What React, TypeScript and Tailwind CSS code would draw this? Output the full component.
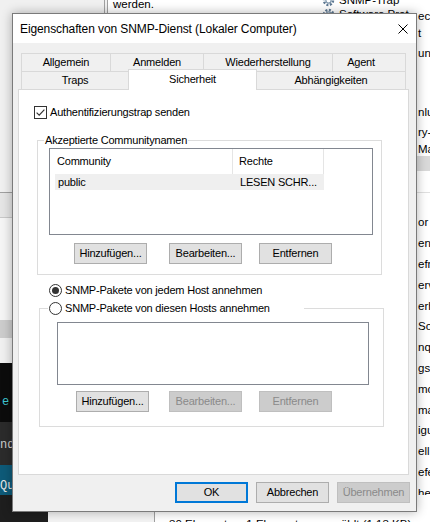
import React from "react";

const btnBase =
  "flex h-[21px] w-[73px] shrink-0 items-center justify-center border text-[11px] tracking-[-0.2px] leading-none";
const btnOn = btnBase + " border-[#adadad] bg-[#e1e1e1] text-black";
const btnOff = btnBase + " border-[#bfbfbf] bg-[#cccccc] text-[#8a8a8a]";

function CheckBox() {
  return (
    <svg width="13" height="13" viewBox="0 0 13 13" className="shrink-0">
      <rect x="0.5" y="0.5" width="12" height="12" fill="#fff" stroke="#333" />
      <path d="M2.6 6.6 L5.2 9.2 L10.4 3.6" fill="none" stroke="#333" strokeWidth="1.2" />
    </svg>
  );
}

function Radio({ on }: { on?: boolean }) {
  return (
    <svg width="13" height="13" viewBox="0 0 13 13" className="shrink-0">
      <circle cx="6.5" cy="6.5" r="6" fill="#fff" stroke="#333" />
      {on && <circle cx="6.5" cy="6.5" r="3.5" fill="#333" />}
    </svg>
  );
}

function Gear() {
  return (
    <svg width="13" height="13" viewBox="0 0 13 13" className="shrink-0">
      <circle cx="6.5" cy="6.5" r="4.5" fill="none" stroke="#5d7892" strokeWidth="2.4" strokeDasharray="2 1.5" />
      <circle cx="6.5" cy="6.5" r="2.6" fill="none" stroke="#7c94aa" strokeWidth="1.2" />
    </svg>
  );
}

const rightRows = ["or", "en", "efr", "erv", "erh", "Sor", "nqu", "gs-", "mo", "ma", "igu", "ell", "efe", "hei"];

export default function App() {
  return (
    <div className="relative h-[522px] w-[430px] overflow-hidden bg-[#f0f0f0] font-['Liberation_Sans',Arial,sans-serif] text-black">
      {/* background window top */}
      <div className="absolute left-[104px] top-0 flex h-[40px] w-[312px] overflow-hidden bg-white">
        <div className="w-[1px] shrink-0 bg-[#a0a0a0]" />
        <div className="w-[2px] shrink-0 bg-[#f0f0f0]" />
        <div className="w-[1px] shrink-0 bg-[#a0a0a0]" />
        <div className="flex min-w-0 flex-1 items-start">
          <span className="-mt-[2px] ml-[5px] text-[11.5px] leading-[13px]">werden.</span>
          <div className="ml-auto flex w-[94px] shrink-0 flex-col overflow-hidden whitespace-nowrap">
            <div className="-mt-[6px] flex items-center gap-[4px]">
              <Gear />
              <span className="text-[11.5px] leading-[13px]">SNMP-Trap</span>
            </div>
            <div className="mt-[1px] flex items-center gap-[4px]">
              <Gear />
              <span className="text-[11.5px] leading-[13px]">Software Prot</span>
            </div>
          </div>
        </div>
      </div>

      {/* background window right strip */}
      <div className="absolute left-[416px] top-0 flex h-[511px] w-[14px] flex-col overflow-hidden bg-white pl-[2px] text-[11.5px] leading-[14px] text-black">
        <div className="h-[9px] shrink-0" />
        <div className="h-[14px] shrink-0">ect</div>
        <div className="h-[3px] shrink-0" />
        <div className="h-[14px] shrink-0">t</div>
        <div className="h-[6px] shrink-0" />
        <div className="h-[14px] shrink-0">un</div>
        <div className="h-[45px] shrink-0" />
        <div className="h-[14px] shrink-0">nlu</div>
        <div className="h-[6px] shrink-0" />
        <div className="h-[14px] shrink-0">ry-</div>
        <div className="h-[3px] shrink-0" />
        <div className="h-[14px] shrink-0">Ma</div>
        <div className="-ml-[2px] h-[15px] shrink-0 bg-[#d9d9d9]" />
        <div className="h-[21px] shrink-0" />
        <div className="-ml-[2px] h-[1px] shrink-0 bg-[#e0e0e0]" />
        <div className="h-[19px] shrink-0" />
        {rightRows.map((r) => (
          <div key={r} className="flex h-[20.8px] shrink-0 items-center">
            {r}
          </div>
        ))}
        <div className="-ml-[2px] h-[11px] shrink-0 bg-[#d4d4d4]" />
      </div>

      {/* background left strip */}
      <div className="absolute left-0 top-0 flex h-[522px] w-[12px] flex-col font-['Liberation_Mono',monospace] text-[12px] leading-[14px]">
        <div className="h-[192px] shrink-0 bg-[#f0f0f0]" />
        <div className="h-[1px] shrink-0 bg-[#a0a0a0]" />
        <div className="h-[24px] shrink-0 bg-[#e5e5e5]" />
        <div className="h-[1px] shrink-0 bg-[#c8c8c8]" />
        <div className="h-[102px] shrink-0 bg-[#f5f5f5]" />
        <div className="h-[18px] shrink-0 bg-[#cccccc]" />
        <div className="h-[25px] shrink-0 bg-[#f0f0f0]" />
        <div className="h-[59px] shrink-0 bg-[#0c0c0c] pl-[2px] pt-[32px] text-[#3ec8d2]">e</div>
        <div className="h-[43px] shrink-0 bg-[#2b2b2b] pt-[16px] text-[#cccccc]">nd</div>
        <div className="h-[38px] shrink-0 bg-[#0e5a78] pt-[14px] text-[#e8e8e8]">Qu</div>
        <div className="flex-1 bg-[#1e1e1e]" />
      </div>

      {/* background bottom */}
      <div className="absolute left-0 top-[495px] flex h-[27px] w-[430px]">
        <div className="w-[48px] bg-[#1e1e1e]" />
        <div className="w-[107px] border-r border-[#a0a0a0] bg-[#f3f3f3]" />
        <div className="flex-1 bg-white pl-[14px] pt-[23px] text-[11.5px] leading-[13px]">
          30 Elemente&nbsp;&nbsp;&nbsp;&nbsp;1 Element ausgewählt (1,13 KB)
        </div>
      </div>

      {/* dialog */}
      <div className="absolute left-[12px] top-[13px] flex h-[499px] w-[405px] flex-col border border-[#7a7a7a] bg-[#f0f0f0] shadow-[0_0_10px_rgba(0,0,0,0.3)]">
        {/* title bar */}
        <div className="flex h-[29px] shrink-0 items-center bg-white pl-[7px]">
          <span className="text-[12px] tracking-[-0.1px]">Eigenschaften von SNMP-Dienst (Lokaler Computer)</span>
          <svg width="10" height="10" viewBox="0 0 10 10" className="ml-auto mr-[8px]">
            <path d="M0.5 0.5 L9.5 9.5 M9.5 0.5 L0.5 9.5" stroke="#000" strokeWidth="1" />
          </svg>
        </div>

        {/* tabs */}
        <div className="ml-[8px] mt-[10px] flex w-[385px] flex-col text-[11px] tracking-[-0.2px]">
          <div className="flex h-[18px]">
            <div className="flex w-[89px] items-center justify-center border-l border-t border-[#d9d9d9]">Allgemein</div>
            <div className="flex w-[93px] items-center justify-center border-l border-t border-[#d9d9d9]">Anmelden</div>
            <div className="flex w-[129px] items-center justify-center border-l border-t border-[#d9d9d9]">Wiederherstellung</div>
            <div className="flex w-[74px] items-center justify-center border-l border-r border-t border-[#d9d9d9] pr-[16px]">Agent</div>
          </div>
          <div className="flex h-[18px] items-start">
            <div className="flex h-[18px] w-[107px] items-center justify-center border-l border-t border-[#d9d9d9]">Traps</div>
            <div className="relative z-10 -mt-[2px] flex h-[21px] w-[129px] items-center justify-center border-l border-r border-t border-[#d9d9d9] bg-white pb-[2px]">
              Sicherheit
            </div>
            <div className="flex h-[18px] w-[149px] items-center justify-center border-r border-t border-[#d9d9d9]">Abhängigkeiten</div>
          </div>
        </div>

        {/* panel */}
        <div className="ml-[5px] flex h-[386px] w-[391px] shrink-0 flex-col border border-[#d9d9d9] bg-white text-[11px] tracking-[-0.2px]">
          <div className="ml-[15px] mt-[16px] flex h-[13px] items-center gap-[3px] leading-[13px]">
            <CheckBox />
            <span>Authentifizierungstrap senden</span>
          </div>

          <fieldset className="ml-[18px] mt-[14px] w-[345px] border border-[#dcdcdc] pb-[10px]">
            <legend className="ml-[6px] px-[1px] leading-[14px]">Akzeptierte Communitynamen</legend>
            <div className="ml-[11px] mt-[1px] flex h-[87px] w-[324px] flex-col border border-[#828790] bg-white">
              <div className="flex h-[25px] shrink-0">
                <div className="flex w-[183px] items-center border-r border-[#e5e5e5] pl-[7px]">Community</div>
                <div className="flex w-[91px] items-center border-r border-[#e5e5e5] pl-[6px]">Rechte</div>
              </div>
              <div className="ml-[5px] flex h-[16px] w-[269px] items-center bg-[#efefef]">
                <div className="w-[182px] pl-[3px]">public</div>
                <div className="pl-[3px]">LESEN SCHR...</div>
              </div>
            </div>
            <div className="mt-[8px] flex">
              <div className={btnOn + " ml-[36px]"}>Hinzufügen...</div>
              <div className={btnOn + " ml-[22px]"}>Bearbeiten...</div>
              <div className={btnOn + " ml-[17px]"}>Entfernen</div>
            </div>
          </fieldset>

          <div className="ml-[30px] mt-[9px] flex h-[13px] items-center gap-[3px] leading-[13px]">
            <Radio on />
            <span>SNMP-Pakete von jedem Host annehmen</span>
          </div>

          <fieldset className="ml-[20px] mt-[4px] w-[345px] border border-[#dcdcdc] pb-[14px]">
            <legend className="ml-[8px] pl-[1px] pr-[34px] leading-[14px]">
              <span className="flex h-[14px] items-center gap-[3px]">
                <Radio />
                <span>SNMP-Pakete von diesen Hosts annehmen</span>
              </span>
            </legend>
            <div className="ml-[17px] mt-[7px] h-[63px] w-[312px] border border-[#828790] bg-white" />
            <div className="mt-[6px] flex">
              <div className={btnOn + " ml-[36px]"}>Hinzufügen...</div>
              <div className={btnOff + " ml-[20px]"}>Bearbeiten...</div>
              <div className={btnOff + " ml-[17px]"}>Entfernen</div>
            </div>
          </fieldset>
        </div>

        {/* bottom buttons */}
        <div className="mt-[7px] flex justify-end gap-[8px] pr-[6px]">
          <div className="flex h-[21px] w-[73px] items-center justify-center border-2 border-[#0078d7] bg-[#e1e1e1] text-[11px] leading-none tracking-[-0.2px]">
            OK
          </div>
          <div className={btnOn}>Abbrechen</div>
          <div className={btnOff}>Übernehmen</div>
        </div>
      </div>
    </div>
  );
}
